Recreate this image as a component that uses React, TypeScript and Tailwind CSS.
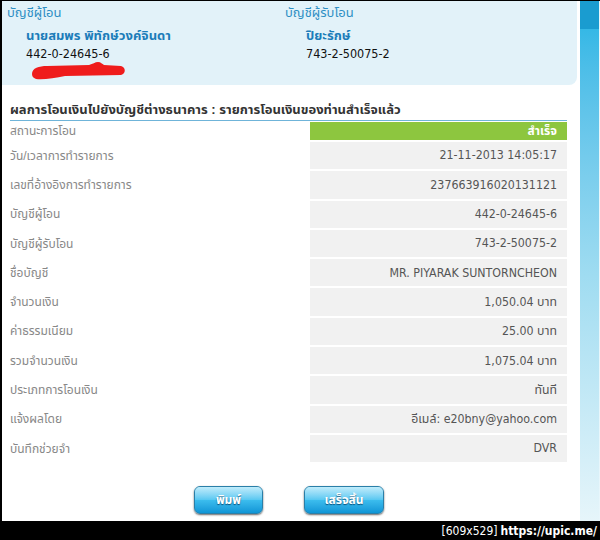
import React from "react";

const rows: [string, string][] = [
  ["วัน/เวลาการทำรายการ", "21-11-2013 14:05:17"],
  ["เลขที่อ้างอิงการทำรายการ", "237663916020131121"],
  ["บัญชีผู้โอน", "442-0-24645-6"],
  ["บัญชีผู้รับโอน", "743-2-50075-2"],
  ["ชื่อบัญชี", "MR. PIYARAK SUNTORNCHEON"],
  ["จำนวนเงิน", "1,050.04 บาท"],
  ["ค่าธรรมเนียม", "25.00 บาท"],
  ["รวมจำนวนเงิน", "1,075.04 บาท"],
  ["ประเภทการโอนเงิน", "ทันที"],
  ["แจ้งผลโดย", "อีเมล์: e20bny@yahoo.com"],
  ["บันทึกช่วยจำ", "DVR"],
];

const font = { fontFamily: '"Liberation Sans", "Noto Sans Thai", "Noto Sans", sans-serif' };
const valueFont = { fontFamily: '"DejaVu Sans Condensed", "Noto Sans Thai", "DejaVu Sans", sans-serif' };

function GlossyButton({ label, width }: { label: string; width: string }) {
  return (
    <button
      className={`${width} relative h-[28px] overflow-hidden rounded-[6px] border border-[#2a7fa8] bg-gradient-to-b from-[#9fe2f8] via-[#3cbdee] to-[#0c95d6] text-[12px] font-bold text-white shadow-[0_1px_2px_rgba(0,0,0,0.6)]`}
    >
      <span className="absolute inset-x-0 top-0 h-1/2 bg-gradient-to-b from-[#c8effc] to-[#5ccaf2] opacity-80" />
      <span className="relative [text-shadow:0_1px_1px_rgba(0,60,100,0.8)]">{label}</span>
    </button>
  );
}

export default function App() {
  return (
    <div className="flex h-[540px] w-[600px] flex-col bg-black" style={font}>
      {/* Main screen area */}
      <div className="ml-[2px] mt-[1px] flex h-[520px] bg-white">
        <div className="flex w-[578px] flex-col">
          {/* Account summary panel */}
          <div className="mr-[3px] flex h-[84px] rounded-br-[8px] bg-[#e2f2f9] pt-[3px]">
            <div className="w-[283px] pl-[5px]">
              <div className="text-[13px] leading-[17px] text-[#2f8fc4]">บัญชีผู้โอน</div>
              <div className="mt-[6px] pl-[19px] text-[13px] font-bold leading-[17px] text-[#1c7db9]">
                นายสมพร พิทักษ์วงค์จินดา
              </div>
              <div className="mt-[1px] pl-[19px] text-[12.5px] leading-[17px] text-[#111]" style={valueFont}>
                442-0-24645-6
              </div>
              {/* red scribble covering hidden text */}
              <svg viewBox="0 0 96 18" className="ml-[24px] block h-[18px] w-[96px] shrink-0">
                <path
                  d="M1 12 C1 6 8 4 16 4 L58 3 C62 2 64 0 67 0 C70 0 71 2 73 3 L90 4 C95 5 95 12 90 13 L34 14 C24 16 12 18 5 17 C2 16 1 14 1 12 Z"
                  fill="#ef1c1c"
                />
              </svg>
            </div>
            <div className="flex-1">
              <div className="text-[13px] leading-[17px] text-[#2f8fc4]">บัญชีผู้รับโอน</div>
              <div className="mt-[6px] pl-[21px] text-[13px] font-bold leading-[17px] text-[#1c7db9]">ปิยะรักษ์</div>
              <div className="mt-[1px] pl-[21px] text-[12.5px] leading-[17px] text-[#111]" style={valueFont}>
                743-2-50075-2
              </div>
            </div>
          </div>

          {/* Result section */}
          <div className="ml-[8px] mt-[17px] w-[557px]">
            <div className="border-b border-[#6fb4d9] pb-[2px] text-[13px] font-bold leading-[16px] text-[#333]">
              ผลการโอนเงินไปยังบัญชีต่างธนาคาร : รายการโอนเงินของท่านสำเร็จแล้ว
            </div>
            <div className="mt-[1px] flex h-[18px] items-center">
              <div className="flex-1 text-[12px] text-[#888]">สถานะการโอน</div>
              <div className="flex h-full w-[257px] items-center justify-end bg-[#8dc63f] pr-[10px] text-[12px] font-bold text-white">
                สำเร็จ
              </div>
            </div>
            {rows.map(([label, value]) => (
              <div key={label} className="mt-[2px] flex h-[27.3px] items-center">
                <div className="flex-1 text-[12px] text-[#888]">{label}</div>
                <div
                  className="flex h-full w-[257px] items-center justify-end bg-[#f1f1f1] pr-[10px] text-[12.3px] text-[#555]"
                  style={valueFont}
                >
                  {value}
                </div>
              </div>
            ))}
          </div>

          {/* Buttons */}
          <div className="mt-[24px] flex justify-center gap-[41px] pr-[4px]">
            <GlossyButton label="พิมพ์" width="w-[69px]" />
            <GlossyButton label="เสร็จสิ้น" width="w-[80px]" />
          </div>
        </div>

        {/* Right blue strip */}
        <div className="flex w-[20px] flex-col border-r border-[#e8f6fb]">
          <div className="h-[28px] bg-[#1a9cd0]" />
          <div className="flex-1 bg-gradient-to-b from-[#35b8e6] via-[#9fdcf1] to-[#e6f5fa]" />
        </div>
      </div>

      {/* Bottom watermark bar */}
      <div
        className="flex h-[19px] items-center justify-end pr-[3px] text-[12px] text-white"
        style={{ fontFamily: '"DejaVu Sans Condensed", "DejaVu Sans", sans-serif' }}
      >
        <span>[609x529]</span>
        <span className="ml-[3px] font-bold">https://upic.me/</span>
      </div>
    </div>
  );
}
